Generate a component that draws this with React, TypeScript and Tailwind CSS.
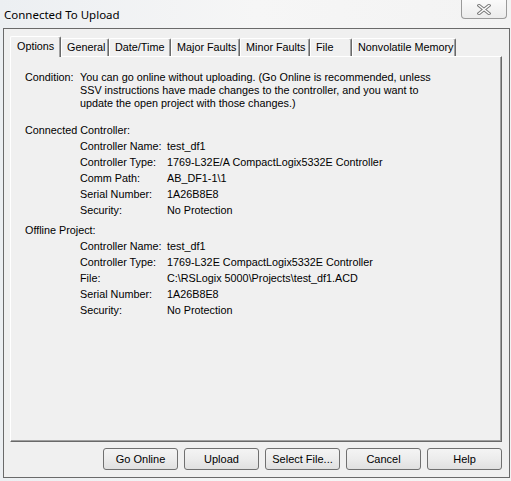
import React from "react";

const tabs = [
  { label: "Options", w: "w-[51px]", sel: true },
  { label: "General", w: "w-[48px]" },
  { label: "Date/Time", w: "w-[62px]" },
  { label: "Major Faults", w: "w-[69px]" },
  { label: "Minor Faults", w: "w-[70px]" },
  { label: "File", w: "w-[42px]" },
  { label: "Nonvolatile Memory", w: "w-[104px]" },
];

const connected: [string, string][] = [
  ["Controller Name:", "test_df1"],
  ["Controller Type:", "1769-L32E/A CompactLogix5332E Controller"],
  ["Comm Path:", "AB_DF1-1\\1"],
  ["Serial Number:", "1A26B8E8"],
  ["Security:", "No Protection"],
];

const offline: [string, string][] = [
  ["Controller Name:", "test_df1"],
  ["Controller Type:", "1769-L32E CompactLogix5332E Controller"],
  ["File:", "C:\\RSLogix 5000\\Projects\\test_df1.ACD"],
  ["Serial Number:", "1A26B8E8"],
  ["Security:", "No Protection"],
];

function Rows({ rows }: { rows: [string, string][] }) {
  return (
    <div className="flex flex-col">
      {rows.map(([k, v], i) => (
        <div key={i} className="flex h-[16px] items-center whitespace-nowrap pl-[69px]">
          <span className="w-[87px] shrink-0">{k}</span>
          <span>{v}</span>
        </div>
      ))}
    </div>
  );
}

function Btn({ label }: { label: string }) {
  return (
    <div className="flex h-[22px] w-[75px] items-center justify-center rounded-[3px] border border-[#707070] bg-gradient-to-b from-[#f4f4f4] via-[#ececec] to-[#e0e0e0] text-[11px]">
      {label}
    </div>
  );
}

export default function App() {
  return (
    <div
      className="relative h-[481px] w-[511px] overflow-hidden bg-gradient-to-r from-[#eceff2] via-[#f6f6f6] to-[#f3f3f3] text-black"
      style={{ fontFamily: '"Liberation Sans", Arial, sans-serif' }}
    >
      {/* title bar */}
      <div className="flex h-[28px] items-center pl-[4px] pt-[1px]">
        <span
          className="text-[11.5px] text-black"
          style={{ fontFamily: '"Noto Sans", "Liberation Sans", sans-serif' }}
        >
          Connected To Upload
        </span>
      </div>
      <div className="absolute right-[4px] top-0 flex h-[19px] w-[46px] items-center justify-center rounded-b-[4px] border border-t-0 border-[#9a9a9a] bg-gradient-to-b from-[#fafafa] to-[#ececec]">
        <svg width="14" height="11" viewBox="0 0 14 11">
          <path d="M2 1.5 L12 9.5 M12 1.5 L2 9.5" stroke="#7a7a7a" strokeWidth="3.4" strokeLinecap="square" />
          <path d="M2 1.5 L12 9.5 M12 1.5 L2 9.5" stroke="#ffffff" strokeWidth="1.4" strokeLinecap="square" />
        </svg>
      </div>

      {/* client area */}
      <div className="ml-[3px] flex h-[450px] w-[507px] flex-col border border-[#6a6a6a] bg-[#f0f0f0] text-[10.8px]">
        <div className="flex flex-col pl-[6px] pt-[7px]">
          {/* tabs */}
          <div className="flex h-[20px] items-end whitespace-nowrap">
            {tabs.map((t) =>
              t.sel ? (
                <div
                  key={t.label}
                  className={`${t.w} relative z-10 -mb-px flex h-[21px] items-center rounded-t-[2px] border-l border-t border-r border-l-white border-t-white border-r-[#696969] bg-[#f0f0f0] pl-[6px] pb-[2px] shadow-[inset_-1px_0_0_#a0a0a0]`}
                >
                  {t.label}
                </div>
              ) : (
                <div
                  key={t.label}
                  className={`${t.w} flex h-[18px] items-center overflow-visible rounded-t-[2px] border-l border-t border-r border-l-white border-t-white border-r-[#696969] bg-[#f0f0f0] pl-[5px] shadow-[inset_-1px_0_0_#a0a0a0]`}
                >
                  {t.label}
                </div>
              )
            )}
          </div>
          {/* panel */}
          <div className="flex h-[386px] w-[492px] flex-col border border-l-white border-t-white border-r-[#696969] border-b-[#696969] pl-[14px] pt-[14px] shadow-[inset_-1px_-1px_0_#a0a0a0]">
            <div className="flex leading-[13px] whitespace-nowrap">
              <span className="w-[55px] shrink-0">Condition:</span>
              <span>
                You can go online without uploading. (Go Online is recommended, unless
                <br />
                SSV instructions have made changes to the controller, and you want to
                <br />
                update the open project with those changes.)
              </span>
            </div>
            <div className="mt-[12px] flex h-[16px] items-center">Connected Controller:</div>
            <div className="-ml-[14px]">
              <Rows rows={connected} />
            </div>
            <div className="mt-[4px] flex h-[16px] items-center">Offline Project:</div>
            <div className="-ml-[14px]">
              <Rows rows={offline} />
            </div>
          </div>
        </div>
        {/* buttons */}
        <div className="flex justify-end gap-[6px] pr-[7px] pt-[6px]">
          <Btn label="Go Online" />
          <Btn label="Upload" />
          <Btn label="Select File..." />
          <Btn label="Cancel" />
          <Btn label="Help" />
        </div>
      </div>
    </div>
  );
}
